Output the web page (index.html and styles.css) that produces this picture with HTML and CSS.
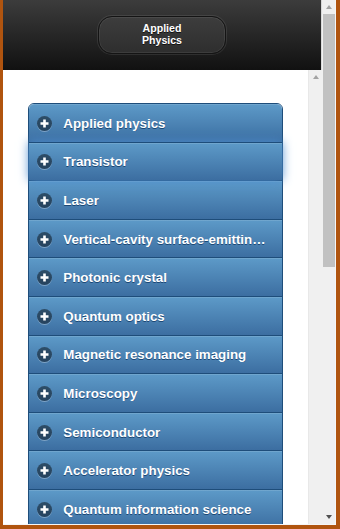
FILE: index.html
```html
<!DOCTYPE html>
<html>
<head>
<meta charset="utf-8">
<link rel="stylesheet" href="styles.css">
</head>
<body>
<div class="window">
  <div class="frame">
    <div class="page">
      <header class="header">
        <div class="hbtn">Applied<br>Physics</div>
      </header>
      <div class="body">
        <div class="content">
          <ul class="list">
            <li class="row"><span class="icon"><svg viewBox="0 0 15 15" width="15" height="15"><path d="M7.5 3.5v8M3.5 7.5h8" stroke="#fff" stroke-width="2.6" fill="none"/></svg></span><span class="label">Applied physics</span></li>
            <li class="row focus"><span class="icon"><svg viewBox="0 0 15 15" width="15" height="15"><path d="M7.5 3.5v8M3.5 7.5h8" stroke="#fff" stroke-width="2.6" fill="none"/></svg></span><span class="label">Transistor</span></li>
            <li class="row"><span class="icon"><svg viewBox="0 0 15 15" width="15" height="15"><path d="M7.5 3.5v8M3.5 7.5h8" stroke="#fff" stroke-width="2.6" fill="none"/></svg></span><span class="label">Laser</span></li>
            <li class="row"><span class="icon"><svg viewBox="0 0 15 15" width="15" height="15"><path d="M7.5 3.5v8M3.5 7.5h8" stroke="#fff" stroke-width="2.6" fill="none"/></svg></span><span class="label">Vertical-cavity surface-emitting laser</span></li>
            <li class="row"><span class="icon"><svg viewBox="0 0 15 15" width="15" height="15"><path d="M7.5 3.5v8M3.5 7.5h8" stroke="#fff" stroke-width="2.6" fill="none"/></svg></span><span class="label">Photonic crystal</span></li>
            <li class="row"><span class="icon"><svg viewBox="0 0 15 15" width="15" height="15"><path d="M7.5 3.5v8M3.5 7.5h8" stroke="#fff" stroke-width="2.6" fill="none"/></svg></span><span class="label">Quantum optics</span></li>
            <li class="row"><span class="icon"><svg viewBox="0 0 15 15" width="15" height="15"><path d="M7.5 3.5v8M3.5 7.5h8" stroke="#fff" stroke-width="2.6" fill="none"/></svg></span><span class="label">Magnetic resonance imaging</span></li>
            <li class="row"><span class="icon"><svg viewBox="0 0 15 15" width="15" height="15"><path d="M7.5 3.5v8M3.5 7.5h8" stroke="#fff" stroke-width="2.6" fill="none"/></svg></span><span class="label">Microscopy</span></li>
            <li class="row"><span class="icon"><svg viewBox="0 0 15 15" width="15" height="15"><path d="M7.5 3.5v8M3.5 7.5h8" stroke="#fff" stroke-width="2.6" fill="none"/></svg></span><span class="label">Semiconductor</span></li>
            <li class="row"><span class="icon"><svg viewBox="0 0 15 15" width="15" height="15"><path d="M7.5 3.5v8M3.5 7.5h8" stroke="#fff" stroke-width="2.6" fill="none"/></svg></span><span class="label">Accelerator physics</span></li>
            <li class="row"><span class="icon"><svg viewBox="0 0 15 15" width="15" height="15"><path d="M7.5 3.5v8M3.5 7.5h8" stroke="#fff" stroke-width="2.6" fill="none"/></svg></span><span class="label">Quantum information science</span></li>
          </ul>
        </div>
        <div class="scroll inner">
          <div class="arrowbox"><span class="arrow up"></span></div>
        </div>
      </div>
    </div>
    <div class="scroll outer">
      <div class="arrowbox"><span class="arrow up"></span></div>
      <div class="thumb"></div>
      <div class="spacer"></div>
      <div class="arrowbox"><span class="arrow down"></span></div>
    </div>
  </div>
</div>
</body>
</html>
```

FILE: styles.css
```css
html, body {
  margin: 0;
  padding: 0;
}
body {
  width: 340px;
  height: 529px;
  overflow: hidden;
  font-family: "Liberation Sans", Arial, Helvetica, sans-serif;
}
.window {
  box-sizing: border-box;
  width: 340px;
  height: 529px;
  background: #b0540f;
  padding: 0 4px 4px 3px;
  display: flex;
}
.frame {
  flex: 1;
  display: flex;
  border-right: 1px solid #f6f6f6;
  border-bottom: 1px solid #f6f6f6;
  overflow: hidden;
  min-height: 0;
}
.page {
  width: 319px;
  display: flex;
  flex-direction: column;
  min-height: 0;
}
.header {
  box-sizing: border-box;
  height: 70px;
  flex: none;
  background: linear-gradient(#3c3c3c, #111111);
  border-right: 1px solid #d8d8d8;
  display: flex;
  align-items: center;
  justify-content: center;
}
.hbtn {
  box-sizing: border-box;
  width: 128px;
  height: 38px;
  border-radius: 14px;
  border: 1px solid #141414;
  background: linear-gradient(#3d3d3d, #2e2e2e);
  box-shadow: inset 0 0 0 1px rgba(255,255,255,0.07), 0 0 0 1px rgba(255,255,255,0.09);
  color: #fff;
  font-weight: bold;
  font-size: 10.6px;
  line-height: 11.6px;
  text-align: center;
  display: flex;
  align-items: center;
  justify-content: center;
  text-shadow: 0 1px 0 #111;
}
.body {
  flex: 1;
  display: flex;
  min-height: 0;
  overflow: hidden;
}
.content {
  width: 305px;
  background: #fff;
  padding: 33px 25px 0 25px;
  box-sizing: border-box;
  overflow: hidden;
}
.list {
  list-style: none;
  margin: 0;
  padding: 0;
  border: 1px solid #1e4d7a;
  border-radius: 6px 6px 0 0;
}
.row {
  box-sizing: border-box;
  height: 38.6px;
  display: flex;
  align-items: center;
  gap: 11px;
  padding: 1px 15px 0 8.3px;
  background: linear-gradient(#5d9ac8, #3c6ea1);
  border-top: 1px solid #1e4d7a;
  box-shadow: inset 0 1px 0 rgba(255,255,255,0.12);
  color: #fff;
  font-weight: bold;
  font-size: 13.33px;
  text-shadow: 0 1px 0 #1b4875;
  position: relative;
}
.row:first-child {
  border-top: none;
  border-radius: 5px 5px 0 0;
  height: 37.6px;
}
.row.focus {
  z-index: 1;
  box-shadow: 0 0 10px #4f8fd0, inset 0 1px 0 rgba(255,255,255,0.12);
}
.icon {
  flex: none;
  width: 15px;
  height: 15px;
  border-radius: 50%;
  background: rgba(0,0,0,0.45);
  box-shadow: 0 1px 0 rgba(255,255,255,0.3);
  display: flex;
}
.label {
  flex: 1;
  min-width: 0;
  white-space: nowrap;
  overflow: hidden;
  text-overflow: ellipsis;
}
.scroll {
  background: #f0f0f0;
  display: flex;
  flex-direction: column;
  flex: none;
}
.scroll.inner {
  width: 14px;
  border-left: 1px solid #e8e8e8;
  box-sizing: border-box;
}
.scroll.outer {
  width: 13px;
}
.arrowbox {
  height: 14px;
  display: flex;
  align-items: center;
  justify-content: center;
  flex: none;
}
.arrow {
  width: 0;
  height: 0;
  border-left: 3.5px solid transparent;
  border-right: 3.5px solid transparent;
}
.arrow.up {
  border-bottom: 4px solid #a3a3a3;
}
.arrow.down {
  border-top: 4px solid #505050;
}
.thumb {
  height: 253px;
  margin: 0 0 0 1px;
  width: 12px;
  background: #c1c1c1;
  flex: none;
}
.spacer {
  flex: 1;
}
```
